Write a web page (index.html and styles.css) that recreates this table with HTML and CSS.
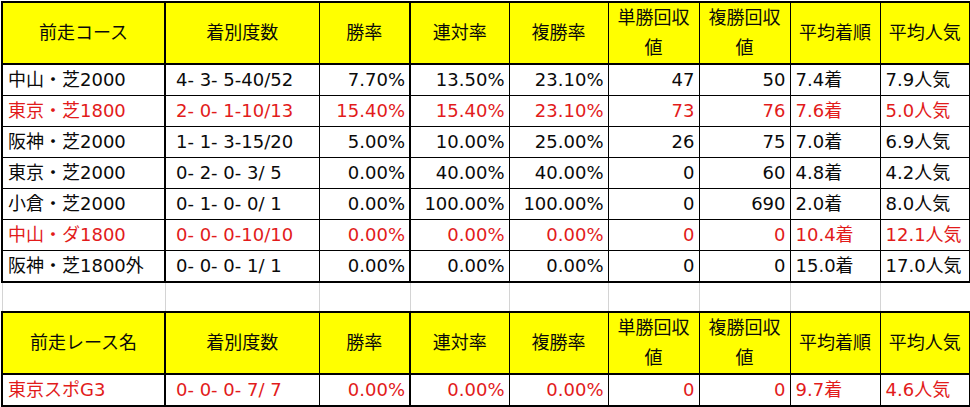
FILE: index.html
```html
<!DOCTYPE html>
<html lang="ja">
<head>
<meta charset="utf-8">
<title>前走コース別成績</title>
<link rel="stylesheet" href="styles.css">
</head>
<body>
<table class="sheet">
  <colgroup>
    <col class="w1"><col class="w2"><col class="w3"><col class="w4"><col class="w5"><col class="w6"><col class="w7"><col class="w8"><col class="w9">
  </colgroup>
  <tbody>
    <tr class="hd">
      <th>前走コース</th><th>着別度数</th><th>勝率</th><th>連対率</th><th>複勝率</th><th>単勝回収<br>値</th><th>複勝回収<br>値</th><th>平均着順</th><th>平均人気</th>
    </tr>
    <tr class="row">
      <td>中山・芝2000</td><td>4- 3- 5-40/52</td><td>7.70%</td><td>13.50%</td><td>23.10%</td><td>47</td><td>50</td><td>7.4着</td><td>7.9人気</td>
    </tr>
    <tr class="row red">
      <td>東京・芝1800</td><td>2- 0- 1-10/13</td><td>15.40%</td><td>15.40%</td><td>23.10%</td><td>73</td><td>76</td><td>7.6着</td><td>5.0人気</td>
    </tr>
    <tr class="row">
      <td>阪神・芝2000</td><td>1- 1- 3-15/20</td><td>5.00%</td><td>10.00%</td><td>25.00%</td><td>26</td><td>75</td><td>7.0着</td><td>6.9人気</td>
    </tr>
    <tr class="row">
      <td>東京・芝2000</td><td>0- 2- 0- 3/ 5</td><td>0.00%</td><td>40.00%</td><td>40.00%</td><td>0</td><td>60</td><td>4.8着</td><td>4.2人気</td>
    </tr>
    <tr class="row">
      <td>小倉・芝2000</td><td>0- 1- 0- 0/ 1</td><td>0.00%</td><td>100.00%</td><td>100.00%</td><td>0</td><td>690</td><td>2.0着</td><td>8.0人気</td>
    </tr>
    <tr class="row red">
      <td>中山・ダ1800</td><td>0- 0- 0-10/10</td><td>0.00%</td><td>0.00%</td><td>0.00%</td><td>0</td><td>0</td><td>10.4着</td><td>12.1人気</td>
    </tr>
    <tr class="row last">
      <td>阪神・芝1800外</td><td>0- 0- 0- 1/ 1</td><td>0.00%</td><td>0.00%</td><td>0.00%</td><td>0</td><td>0</td><td>15.0着</td><td>17.0人気</td>
    </tr>
    <tr class="gap">
      <td></td><td></td><td></td><td></td><td></td><td></td><td></td><td></td><td></td>
    </tr>
    <tr class="hd">
      <th>前走レース名</th><th>着別度数</th><th>勝率</th><th>連対率</th><th>複勝率</th><th>単勝回収<br>値</th><th>複勝回収<br>値</th><th>平均着順</th><th>平均人気</th>
    </tr>
    <tr class="row red last">
      <td>東京スポG3</td><td>0- 0- 0- 7/ 7</td><td>0.00%</td><td>0.00%</td><td>0.00%</td><td>0</td><td>0</td><td>9.7着</td><td>4.6人気</td>
    </tr>
  </tbody>
</table>
</body>
</html>
```

FILE: styles.css
```css
html, body {
  margin: 0;
  background: #ffffff;
}
body {
  padding: 1px 0 0 1px;
  font-family: "DejaVu Sans", "Noto Sans CJK JP", sans-serif;
  font-size: 18px;
  color: #0a0a0a;
}
.sheet {
  border-collapse: collapse;
  table-layout: fixed;
  width: 968px;
}
.w1 { width: 163px; }
.w2 { width: 154px; }
.w3 { width: 91px; }
.w4 { width: 99px; }
.w5 { width: 99px; }
.w6 { width: 91px; }
.w7 { width: 91px; }
.w8 { width: 90px; }
.w9 { width: 90px; }

.sheet th,
.sheet td {
  border: 1px solid #000000;
  padding: 0 4px;
  white-space: pre;
  overflow: hidden;
  vertical-align: middle;
}
.sheet tr > :first-child {
  border-left: 2px solid #000000;
  border-right: 2px solid #000000;
}
.sheet tr > :nth-child(3) {
  border-right: 2px solid #000000;
}
.sheet tr > :last-child {
  border-right: 2px solid #000000;
}

.hd th {
  background: #ffff00;
  font-weight: normal;
  text-align: center;
  height: 58px;
  line-height: 30px;
  padding: 0;
  border-top: 2px solid #000000;
  border-bottom: 2px solid #000000;
}

.row td {
  height: 30px;
  line-height: 30px;
  text-align: right;
}
.row td:nth-child(1) {
  text-align: left;
  padding-left: 5px;
}
.row td:nth-child(2) {
  text-align: left;
  padding-left: 10px;
}
.row td:nth-child(8),
.row td:nth-child(9) {
  text-align: left;
  padding-left: 5px;
}
.row.last td {
  border-bottom: 2px solid #000000;
}
.red td {
  color: #e21b1b;
}

.gap td {
  height: 28px;
  border-top: none;
  border-bottom: none;
  border-left: 1px solid #d4d4d4;
  border-right: 1px solid #d4d4d4;
}
.sheet .gap > :first-child,
.sheet .gap > :nth-child(3),
.sheet .gap > :last-child {
  border-left: 1px solid #d4d4d4;
  border-right: 1px solid #d4d4d4;
}
```
